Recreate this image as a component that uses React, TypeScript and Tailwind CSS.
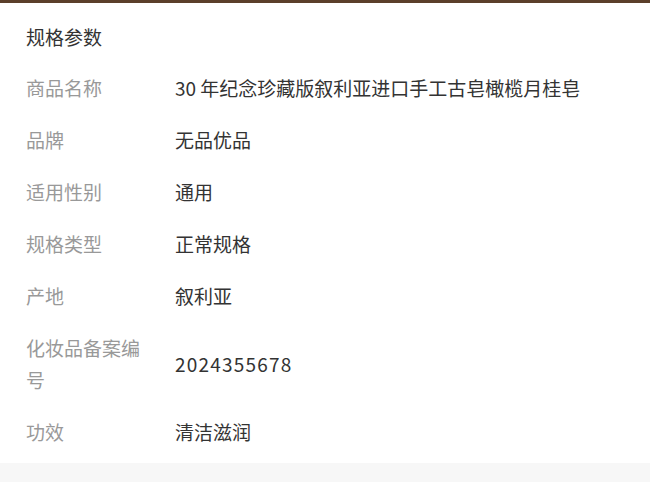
const specs: { label: string; value: string; mono?: boolean }[] = [
  { label: '商品名称', value: '30 年纪念珍藏版叙利亚进口手工古皂橄榄月桂皂' },
  { label: '品牌', value: '无品优品' },
  { label: '适用性别', value: '通用' },
  { label: '规格类型', value: '正常规格' },
  { label: '产地', value: '叙利亚' },
  { label: '化妆品备案编号', value: '2024355678', mono: true },
  { label: '功效', value: '清洁滋润' },
];

export default function App() {
  return (
    <div
      className="w-[650px] h-[482px] bg-[#f7f7f7] flex flex-col"
      style={{ fontFamily: '"Noto Sans CJK SC", "Noto Sans", sans-serif' }}
    >
      <div className="h-[3px] bg-[#5b3f2a]" />
      <div className="bg-white pt-[9px] pb-[5px] px-[26px]">
        <div className="h-[50px] flex items-center text-[19px] text-[#333]">规格参数</div>
        {specs.map((s) => (
          <div key={s.label} className="flex items-center py-[10px] text-[19px] leading-[32px]">
            <div className="w-[149px] shrink-0 pr-[25px] text-[#999]">{s.label}</div>
            <div className={s.mono ? 'text-[#333] tracking-[1.2px]' : 'text-[#333]'}>{s.value}</div>
          </div>
        ))}
      </div>
    </div>
  );
}
